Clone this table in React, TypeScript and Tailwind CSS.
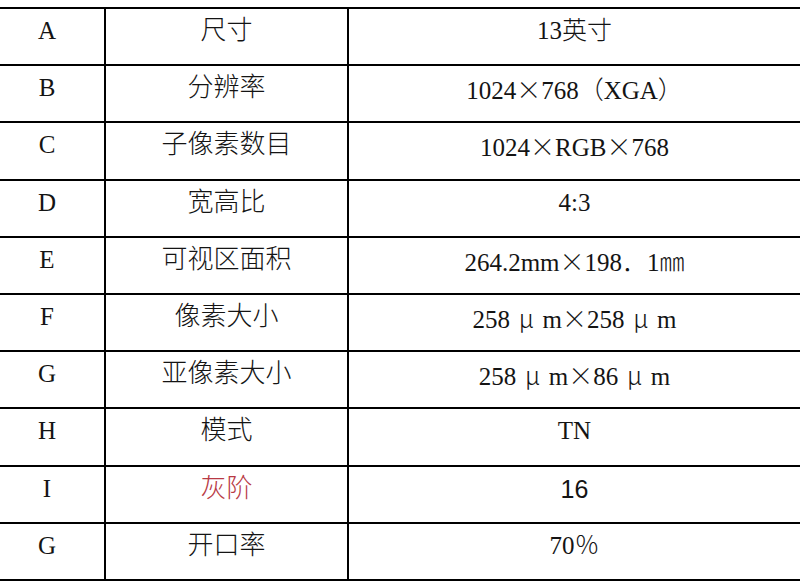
import React from "react";

const X = () => <span className="font-['Noto_Sans_CJK_SC',sans-serif] font-light">×</span>;
const Mu = () => <span className="inline-block w-[1.3em] text-center font-['Noto_Sans_CJK_SC',sans-serif] font-light">μ</span>;

type Row = { k: string; name: React.ReactNode; value: React.ReactNode; h: string };

const rows: Row[] = [
  { k: "A", name: "尺寸", value: <>13英寸</>, h: "h-[57px]" },
  { k: "B", name: "分辨率", value: <>1024<X />768（XGA）</>, h: "h-[57px]" },
  { k: "C", name: "子像素数目", value: <>1024<X />RGB<X />768</>, h: "h-[58px]" },
  { k: "D", name: "宽高比", value: <>4:3</>, h: "h-[57px]" },
  { k: "E", name: "可视区面积", value: <>264.2mm<X />198．1㎜</>, h: "h-[57px]" },
  { k: "F", name: "像素大小", value: <>258<Mu />m<X />258<Mu />m</>, h: "h-[57px]" },
  { k: "G", name: "亚像素大小", value: <>258<Mu />m<X />86<Mu />m</>, h: "h-[57px]" },
  { k: "H", name: "模式", value: <>TN</>, h: "h-[58px]" },
  { k: "I", name: <span className="text-[#b83a45]">灰阶</span>, value: <span className="font-['Liberation_Sans',sans-serif] font-normal">16</span>, h: "h-[57px]" },
  { k: "G", name: "开口率", value: <>70％</>, h: "h-[57px]" },
];

export default function App() {
  return (
    <div className="w-[800px] h-[582px] bg-white overflow-hidden pt-[7px] font-['Liberation_Serif','Noto_Sans_CJK_SC',serif] font-light text-[25px] leading-[24px] text-[#141414]">
      <div className="border-t-2 border-black">
        {rows.map((r, i) => (
          <div key={i} className={`grid grid-cols-[106px_243px_1fr] border-b-2 border-black ${r.h}`}>
            <div className="border-r-2 border-black text-center pt-[10px] pr-[10px]">{r.k}</div>
            <div className="border-r-2 border-black text-center pt-[10px] text-[26px]">{r.name}</div>
            <div className="text-center pt-[10px]">{r.value}</div>
          </div>
        ))}
      </div>
    </div>
  );
}
